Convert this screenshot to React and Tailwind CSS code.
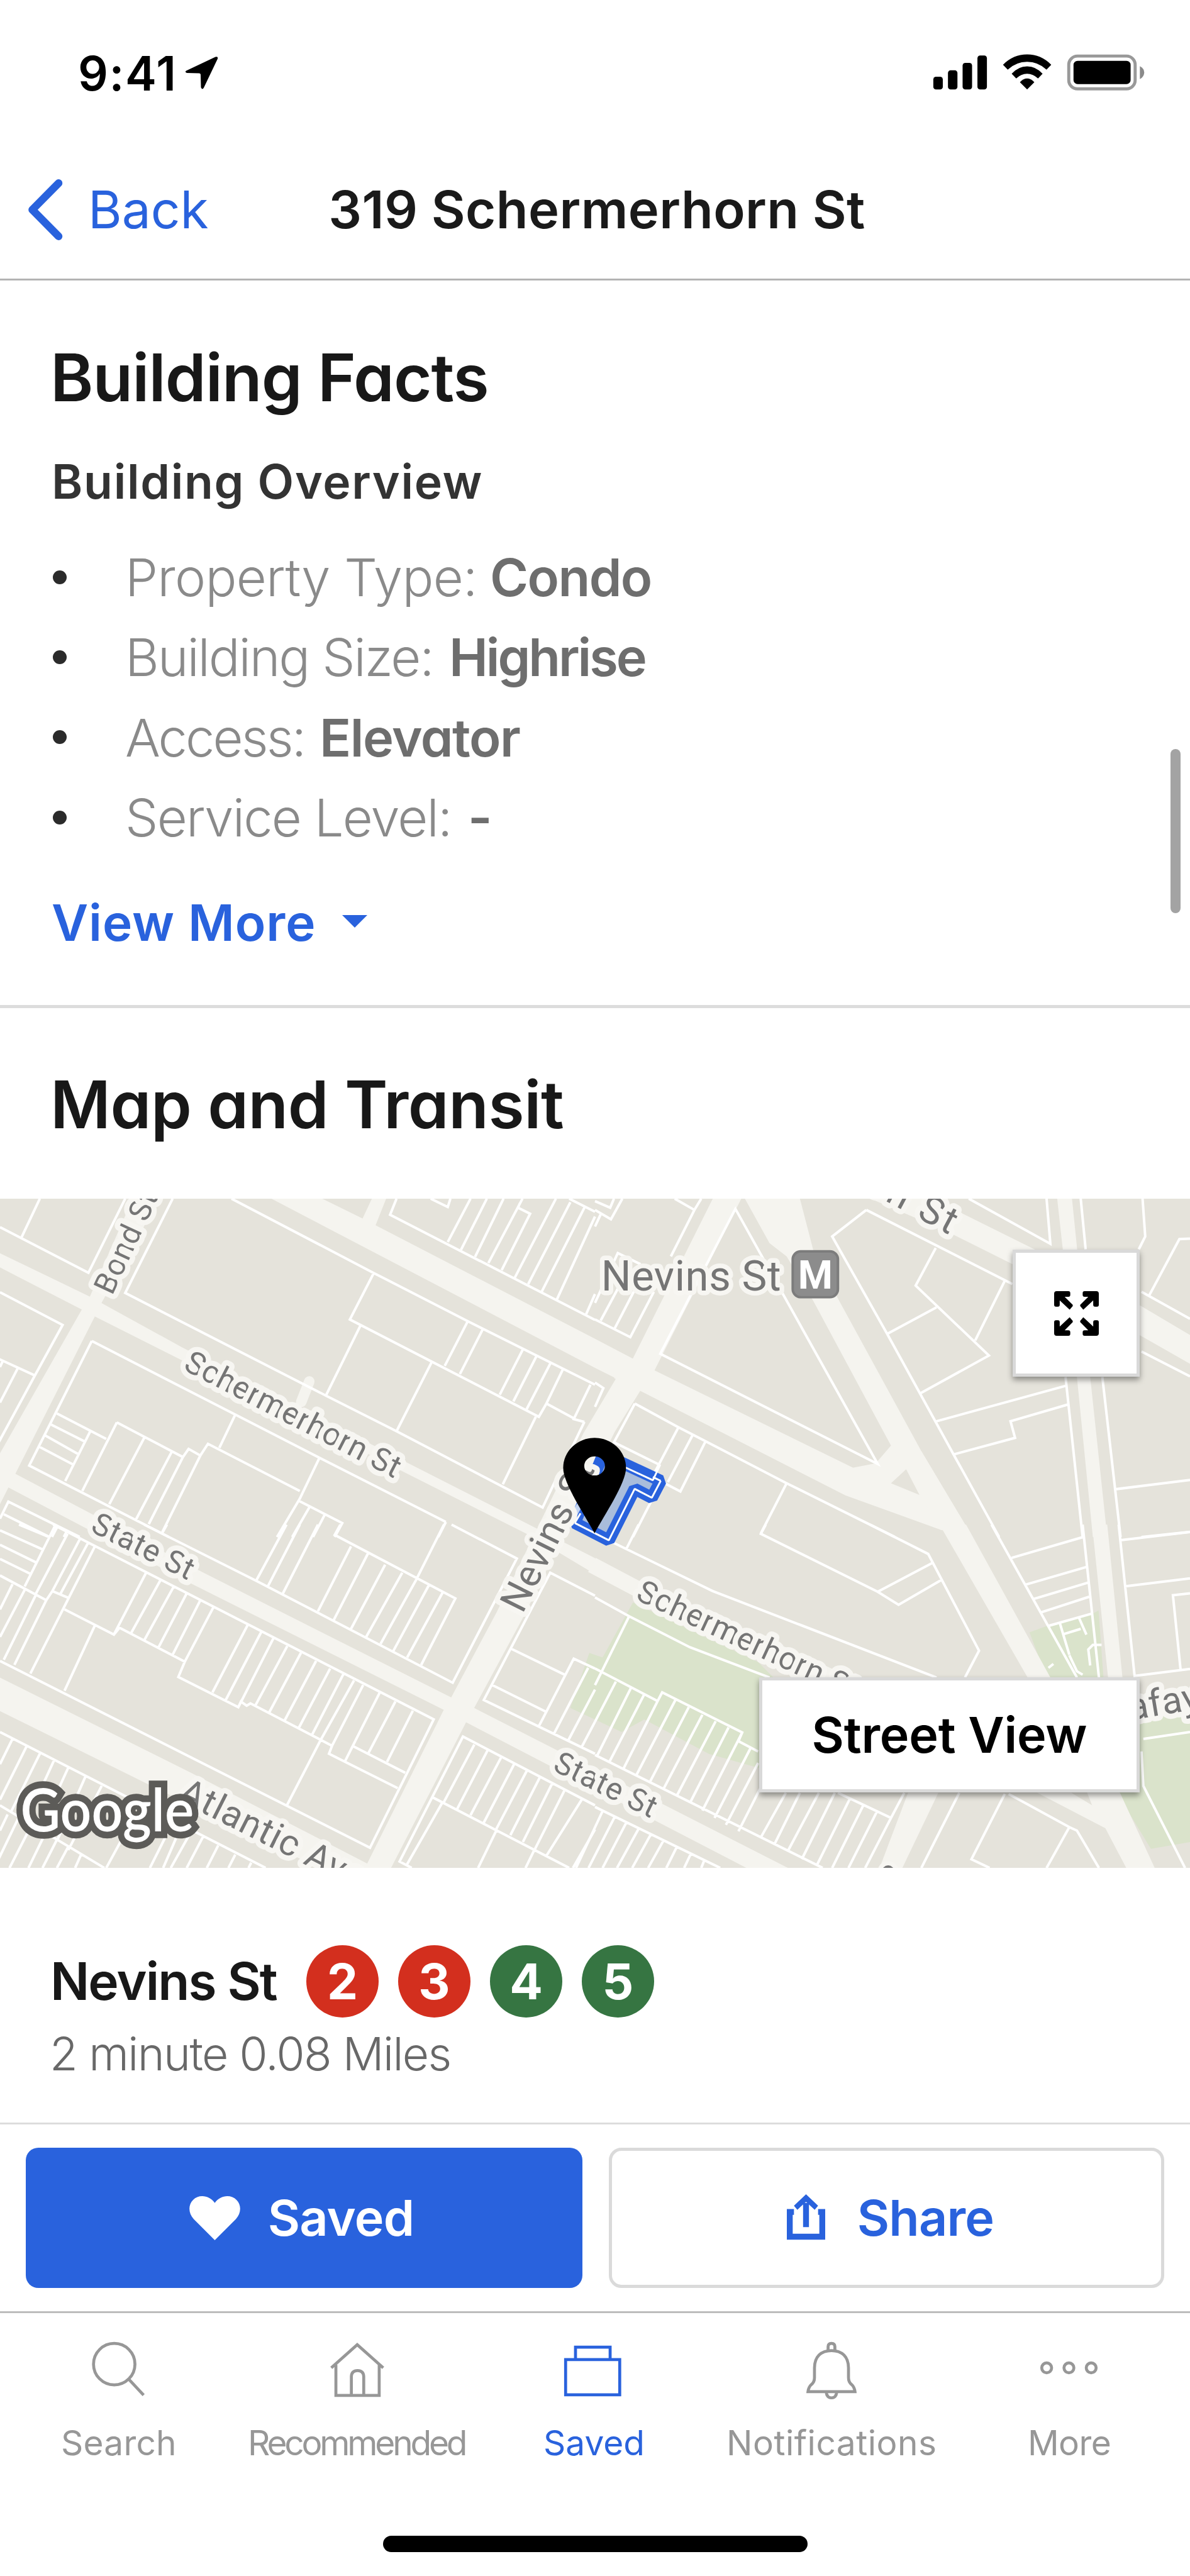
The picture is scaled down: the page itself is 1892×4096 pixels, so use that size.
const FACTS = [
  { label: "Property Type:", value: "Condo", labelClass: "w-[580px] tracking-[-0.75px]", valueClass: "tracking-[-1.6px]" },
  { label: "Building Size:", value: "Highrise", labelClass: "w-[515px] tracking-[-2.2px]", valueClass: "tracking-[-3.1px]" },
  { label: "Access:", value: "Elevator", labelClass: "w-[309px] tracking-[-2.9px]", valueClass: "tracking-[-1.5px]" },
  { label: "Service Level:", value: "-", labelClass: "w-[545px] tracking-[-1.8px]", valueClass: "" },
];

const LINES = [
  { name: "2", color: "bg-[#d32f1e]" },
  { name: "3", color: "bg-[#d32f1e]" },
  { name: "4", color: "bg-[#367542]" },
  { name: "5", color: "bg-[#367542]" },
];

function StatusBar() {
  return (
    <div className="flex h-[233px] shrink-0 items-center justify-between pl-[124px] pr-[40px]">
      <div className="flex items-center">
        <span className="text-[75px] font-semibold leading-none tracking-[1.6px] text-black">9:41</span>
        <svg viewBox="302 92 52 52" className="ml-[13px] mb-[1px] h-[52px] w-[52px]">
          <path d="M349.500 92.500Q354 91 353 95.500L331 141.500Q328.500 145.500 326.500 141L326 121Q326 118.500 323.500 118.500L304 118Q300 116.500 303 114.500Z" fill="#000" />
        </svg>
      </div>
      <svg viewBox="0 0 1200 360" className="h-[118px] w-[394px]">
        <rect x="78" y="195" width="46" height="62" rx="13" />
        <rect x="149" y="164" width="46" height="93" rx="13" />
        <rect x="220" y="128" width="46" height="129" rx="13" />
        <rect x="292" y="92" width="46" height="165" rx="13" />
        <path d="M416 137Q466 87 533 87Q600 87 650 137L627 161Q586 123 533 123Q480 123 439 161Z" />
        <path d="M458 181Q490 145 533 145Q576 145 608 181L586 204Q562 181 533 181Q504 181 480 204Z" />
        <path d="M498 222Q515 204 533 204Q551 204 568 222L533 257Z" />
        <rect x="735" y="95" width="322" height="159" rx="42" fill="none" stroke="#999" strokeWidth="15" />
        <rect x="758" y="118" width="277" height="113" rx="20" />
        <path d="M1080 144Q1101 155 1101 175Q1101 196 1080 207Z" fill="#8a8a8a" />
      </svg>
    </div>
  );
}

function NavBar() {
  return (
    <div className="grid h-[213px] shrink-0 grid-cols-[1fr_auto_1fr] items-center border-b-[3px] border-[#b3b3b3] pb-[9px] pl-[6px]">
      <div className="flex items-center pl-[36px]">
        <svg viewBox="0 0 60 100" className="h-[99px] w-[59px]">
          <path d="M52 7L9.500 50L52 93" fill="none" stroke="#2962dd" strokeWidth="12.500" strokeLinecap="round" strokeLinejoin="round" />
        </svg>
        <span className="ml-[39px] text-[82px] leading-none text-[#2962dd]">Back</span>
      </div>
      <h1 className="text-[83px] font-semibold leading-none tracking-[0.4px] text-[#1a1a1a]">319 Schermerhorn St</h1>
      <div />
    </div>
  );
}

function BuildingFacts() {
  return (
    <section className="relative h-[1157px] shrink-0 border-b-[5px] border-[#dcdcdc] pl-[80px] pt-[89px]">
      <h2 className="text-[104px] font-[570] leading-[130px] tracking-[-0.95px] text-[#181818] [font-feature-settings:'cv11']">Building Facts</h2>
      <h3 className="mt-[61px] pl-[2px] text-[75px] font-semibold leading-[80px] tracking-[1.65px] text-[#333]">Building Overview</h3>
      <ul className="mt-[49px] text-[83px] leading-[127.4px] [font-feature-settings:'cv11']">
        {FACTS.map((f) => (
          <li key={f.label} className="flex h-[127.4px] items-center">
            <span className="mb-[2px] ml-[4px] mr-[93px] h-[22px] w-[22px] rounded-full bg-[#2b2b2b]" />
            <span className={"whitespace-nowrap font-[345] text-[#8a8a8a] " + f.labelClass}>{f.label}</span>
            <span className={"font-semibold text-[#6e6e6e] " + f.valueClass}>{f.value}</span>
          </li>
        ))}
      </ul>
      <div className="mt-[52px] flex h-[100px] items-center pl-[2px]">
        <span className="text-[80px] font-semibold tracking-[0.9px] text-[#2962dd]">View More</span>
        <svg viewBox="0 0 40 20" className="ml-[42px] mb-[3px] h-[20px] w-[40px]">
          <path d="M0 0H40L20 20Z" fill="#2962dd" />
        </svg>
      </div>
      <div className="absolute right-[15px] top-[745px] h-[261px] w-[16px] rounded-full bg-[#a3a3a3]" />
    </section>
  );
}

/* Lot outlines, one path per map tile, in the tile's own grid. */
const LOTS_NW =
  "M0 168L233 374L330 39M105 39L57 213M0 462L165 610L92 838L-5 1145M92 838L-10 758M8 770L0 800M47 805L0 960M455 39L330 465L860 930L1045 1090L1430 1435L1470 1290M1540 1048L1500 1190M610 39L985 375L1235 595L1568 880M985 375L922 585L1420 1025L1440 965L1510 1030M950 612L860 925M1232 595L1172 795M1272 630L1212 832M1378 720L1317 925M1414 750L1353 955M1450 785L1388 990M1483 812L1440 965M1556 880L1512 1035L1540 1048M1137 780L1045 1090M1412 1025L1325 1330M1045 39L1028 112L1568 587M1240 39L1180 235M1283 39L1215 270M1327 39L1252 302M1377 39L1287 330M1370 60L1365 80L1397 107L1322 362M1465 39L1357 395M1503 55L1392 425M1540 80L1428 458M1568 120L1468 493M1568 470L1545 560M1135 39L1180 77L1187 39M1500 39L1568 98M242 682L620 1015L842 1210L1175 1500M242 682L77 1245L445 1568M150 1010L280 1125M135 1060L225 1138M120 1110L208 1195M103 1160L192 1240M238 1090L172 1315M308 1050L217 1360M308 1050L482 1207L497 1170L528 1200L548 1147L790 1360M380 1120L288 1420M452 1185L358 1490M482 1207L392 1510M528 1200L428 1545M620 1015L578 1165M842 1210L790 1395L730 1568M788 1405L902 1505L882 1568M815 1435L770 1568M855 1470L825 1568M1175 1500L1155 1568M0 1485L22 1408L210 1568M10 1465L130 1568M150 1525L137 1568M175 1545L168 1568";
const LOTS_NE =
  "M0 585L93 665L155 460M0 510L60 285L120 335M15 590L62 440M52 625L105 450M0 90L42 132L72 39M0 50L40 80L50 39M15 110L0 165M210 39L262 90L280 39M262 90L200 300M370 85L172 740L745 1238ZM715 90L625 210L770 650L945 1195L1065 1568M715 90L1100 425M898 262L845 432L1038 748L858 918M900 530L770 650M1080 410L1002 680M985 39L1200 243L1190 39M1280 39L1293 268M1443 39L1450 210L1433 268M1568 220L1540 222L1460 478M1440 460L1568 582M1440 730L1568 842M900 1045L1240 885M945 1195L1107 1120L1095 1045L1245 970M1240 845L1285 1568M1337 845L1385 1568M1372 1352L1568 1310M1440 1568L1568 1545M105 965L220 1072L505 1325L790 1568M105 965L50 1140L168 1240M220 1072L150 1300M258 1105L192 1320M290 1140L225 1362L150 1295M505 1325L437 1552M150 1400L100 1568M0 870L22 895L0 980";
const LOTS_SW =
  "M380 0L675 245L1193 690L1362 148L1190 0M440 0L428 35M755 0L675 245M790 0L705 272M838 0L745 302M897 0L882 45L1200 322L1110 612M925 95L838 378M970 125L880 415M1015 175L925 455M1060 210L965 490M1097 240L1003 520M1130 265L1037 550M1167 295L1073 580M1170 0L1097 240M1568 310L1450 210L1275 765L1568 1000M1345 540L1488 655M1297 700L1437 815M1568 628L1512 585L1420 880M1550 625L1460 912M1568 720L1498 940M1568 860L1533 970M140 0L1143 850L975 1410L0 595M50 0L130 55M0 25L112 108M0 88L95 165M0 150L80 215M0 222L122 330L138 290L178 318M145 5L65 270M178 40L95 300M210 65L138 290M232 80L160 300M250 95L80 650M33 260L0 370M65 285L0 490M95 305L10 590M122 330L38 612M170 370L300 480L385 210M250 440L170 725M300 480L315 450L487 598L470 665L628 797L635 772L650 790L660 780L875 965L867 1000L1048 1150M422 245L345 475M458 270L380 505M492 300L418 535M528 330L455 568M562 362L487 598M652 440L560 732M688 470L595 765M720 498L628 797M757 530L672 792M793 560L710 818M833 595L750 855M870 628L788 885M905 652L823 915M933 680L845 940M957 700L875 965M1000 735L910 1030M1042 772L970 1000M1088 812L1020 1035M932 968L1068 1083M845 940L757 1222M0 905L700 1498M33 935L0 1045M70 968L0 1200M105 1000L30 1250M142 1030L70 1290M180 1060L100 1350M225 1100L150 1380M268 1140L180 1420M0 1225L275 1498M20 1265L0 1335M50 1275L-15 1498M85 1305L25 1498M120 1345L75 1498M150 1375L112 1498M180 1405L150 1498M215 1435L198 1498M345 1300L280 1498M440 1350L395 1498M470 1345L430 1498M500 1350L450 1498M535 1362L492 1498M575 1400L545 1498M620 1440L602 1498M662 1475L655 1498M1568 1225L1220 925L1053 1470L1085 1498M1140 1190L1500 1498M1250 960L1170 1210M1285 985L1205 1240M1320 1018L1240 1268M1355 1045L1275 1300M1388 1075L1308 1328M1422 1105L1345 1355M1455 1130L1378 1385M1487 1162L1410 1415M1535 1195L1440 1445M1568 1330L1510 1498M1165 1215L1070 1490M1308 1335L1260 1498M1408 1420L1385 1498";
const LOTS_SE =
  "M450 0L437 40L745 293L800 350L912 242M725 0L878 128L1012 550L975 667M745 293L888 168M1045 0L1270 667M1285 0L1328 667M1380 0L1422 660L1568 630M1098 145L1285 55M1135 262L1295 185M1155 325L1300 253M1175 383L1302 315M1195 442L1310 388M1385 68L1568 32M1395 270L1568 235M1568 300L1523 308L1543 630M1445 935L1568 905M1440 990L1445 1140L1555 1498M0 40L310 290L900 667M0 318L90 400L250 535L460 667M90 400L0 700M83 105L115 0M0 628L165 770L177 732L388 907L378 945L430 990M55 685L0 860M95 712L5 1010M130 740L38 1035M165 770L75 1065M212 765L110 1090M247 797L145 1122M283 830L180 1155M318 858L215 1185M352 885L250 1215M388 907L283 1248M410 975L315 1280M430 1040L345 1310M445 1120L378 1338M0 1005L600 1498M503 1170L437 1365M540 1170L472 1398M590 1170L508 1425M632 1170L545 1460M672 1195L585 1485M707 1225L625 1498M742 1255L668 1498M780 1280L712 1498M640 1170L780 1280L815 1170M960 1170L860 1498M1080 1175L992 1460L1040 1498M1090 1175L1250 1320L1270 1335L1328 1498M1250 1320L1190 1498M0 1232L330 1498M20 1250L-50 1498M52 1275L-17 1498M82 1302L20 1498M115 1327L58 1498M147 1352L98 1498M180 1380L140 1498M215 1408L188 1498M252 1438L235 1498M288 1465L280 1498M1225 430L1250 568M1235 478L1280 455M1275 405L1295 480M1305 615L1300 545L1312 525L1335 525M1250 570L1270 640L1285 655M1195 625L1208 608";

function StreetLabel({ x, y, angle, size, length, children }) {
  return (
    <text
      transform={`translate(${x} ${y}) rotate(${angle})`}
      fontSize={size}
      textLength={length}
      fontWeight="450"
      fill="#757575"
      stroke="#f7f6f2"
      strokeWidth="17"
      strokeLinejoin="round"
      style={{ paintOrder: "stroke" }}
    >
      {children}
    </text>
  );
}

function MapArt() {
  return (
    <svg viewBox="0 1934 1920 1080" preserveAspectRatio="none" className="block h-[1064px] w-full bg-[#e5e3db] font-[Roboto,sans-serif]">
      <g transform="translate(960 2460) scale(.61224 .36990)" fill="#dae3cb">
        <path d="M100 340L430 600L470 667V1080L300 1000L130 850L70 905L-65 800L-15 560L20 580Z" />
        <path d="M1145 470L1195 440L1310 390L1327 375L1340 667H1190Z" />
        <path d="M1425 850L1568 815V1385L1465 1415L1375 1170Z" />
      </g>
      <g fill="#f5f4ef">
        <path d="M0 2022L145 2092L294 2174L655 2359L960 2514V2540L860 2480L153 2124L132 2113L0 2045Z" />
        <path d="M955 2525L1040 2570L1130 2613L1241 2660L1500 2780" fill="none" stroke="#f5f4ef" strokeWidth="26" />
        <path d="M214 1934H257L165 2100L153 2124L0 2427H-20V2380L132 2113L145 2092Z" />
        <path d="M-5 2360L23 2377L321 2534L728 2739L765 2756L1073 2913L1275 3016H1208L1052 2935L752 2779L716 2759L306 2554L8 2397L-5 2392Z" />
        <path d="M438 1934H520L585 1966L600 1934H623L606 1977L960 2160L1021 2192L1005 2244L994 2224L960 2207Z" />
        <path d="M1150 1934H1196L1056 2211L1033 2244L992 2310L845 2608L765 2756L752 2779L631 3014H589L716 2759L728 2739L802 2600L941 2313L994 2224L1021 2192Z" />
        <g transform="translate(960 1920) scale(.61224 .35714)">
          <path d="M157 815L680 1255L740 1235L780 1155L860 1180L995 1568L910 1535L660 1380L120 908L50 850L100 762Z" />
          <path d="M395 39H540L575 270L640 490L860 1180L995 1568L910 1535L780 1155L575 500L505 300L460 240Z" />
          <path d="M1218 39H1257L1305 845L1350 1568H1312L1270 845Z" />
          <path d="M700 -60L955 95L1155 265L1440 525L1568 655V785L1440 660L1100 335L925 185L700 20Z" />
          <path d="M820 1262L855 1378L780 1325Z" fill="#e5e3db" />
        </g>
        <g transform="translate(960 2460) scale(.61224 .36990)">
          <path d="M978 0L1200 667L1385 1175L1475 1498H1400L1345 1325L1165 1170H1255L1310 1225L1297 1170L1140 667L915 20L880 0Z" />
          <path d="M1310 0H1350L1390 667H1352Z" />
          <path d="M825 1170H905L810 1498H750Z" />
        </g>
        <path d="M0 2707L309 2861L606 3014H514L245 2882L0 2761Z" />
        <path d="M499 2229L486 2262" fill="none" stroke="#f5f4ef" strokeWidth="17" strokeLinecap="round" />
      </g>
      <g fill="none" stroke="#ffffff" strokeWidth="4">
        <path transform="translate(0 1920) scale(.61224 .35714)" d={LOTS_NW} vectorEffect="non-scaling-stroke" />
        <path transform="translate(960 1920) scale(.61224 .35714)" d={LOTS_NE} vectorEffect="non-scaling-stroke" />
        <path transform="translate(0 2460) scale(.61224 .36990)" d={LOTS_SW} vectorEffect="non-scaling-stroke" />
        <path transform="translate(960 2460) scale(.61224 .36990)" d={LOTS_SE} vectorEffect="non-scaling-stroke" />
      </g>

      <g transform="translate(790 2300) scale(.33333)" strokeLinejoin="bevel">
        <path d="M412 472L577 556L702 307L785 350L828 268L550 139Z" fill="#a9bddb" stroke="#2962dd" strokeWidth="58" />
        <path d="M412 472L577 556L702 307L785 350L828 268M440 425L412 472M650 200L790 265L826 190M790 250L828 268" fill="none" stroke="#fff" strokeWidth="9" />
        <path d="M390 480L385 440L425 375L440 405L410 462Z" fill="#c3d4f1" />
      </g>

      <StreetLabel x={181} y={2091} angle={-65} size={49} length={176}>Bond St</StreetLabel>
      <StreetLabel x={294} y={2209} angle={27.3} size={51} length={385}>Schermerhorn St</StreetLabel>
      <StreetLabel x={144} y={2470} angle={26.7} size={50} length={178}>State St</StreetLabel>
      <StreetLabel x={843} y={2605} angle={-63.4} size={61} length={262}>Nevins St</StreetLabel>
      <StreetLabel x={1024} y={2580} angle={25} size={51} length={388}>Schermerhorn St</StreetLabel>
      <StreetLabel x={890} y={2856} angle={25.9} size={50} length={178}>State St</StreetLabel>
      <StreetLabel x={285} y={2904} angle={26.8} size={59} length={326}>Atlantic Ave</StreetLabel>
      <StreetLabel x={1392} y={1918} angle={28} size={62} length={158}>on St</StreetLabel>
      <StreetLabel x={1791} y={2781} angle={-9.4} size={60} length={370}>Lafayette Ave</StreetLabel>
      <circle cx="1433" cy="3020" r="17" fill="#f7f6f2" />
      <circle cx="1433" cy="3020" r="10" fill="#757575" />

      <text x="970" y="2082" fontSize="68" textLength="290" fill="#757575" stroke="#f7f6f2" strokeWidth="15" strokeLinejoin="round" style={{ paintOrder: "stroke" }}>Nevins St</text>
      <rect x="1279" y="2019" width="73" height="74" rx="13" fill="#8c8c8c" stroke="#7c7c7c" strokeWidth="4" />
      <text x="1315.500" y="2079" fontSize="64" fontWeight="700" fill="#fff" textAnchor="middle">M</text>

      <path
        transform="translate(790 2300) scale(.33333)"
        fillRule="evenodd"
        d="M508 522C458 428 356 280 356 205A152 145 0 0 1 660 205C660 280 558 428 508 522ZM508 150A50 46 0 1 0 508 242A50 46 0 1 0 508 150Z"
      />

      <text x="33" y="2955" fontSize="96" textLength="280" lengthAdjust="spacingAndGlyphs" fill="#fff" stroke="#5c5b58" strokeWidth="22" fontFamily="Lato" fontWeight="600" style={{ paintOrder: "stroke" }}>Google</text>
    </svg>
  );
}

const ARROW = "M4 0H23Q26 0 26 3V6Q26 9 23 9H17L30 22V24L25 30L9 15V22Q9 25 6 25H3Q0 25 0 22V4Q0 0 4 0Z";

function MapAndTransit() {
  return (
    <section className="shrink-0">
      <h2 className="h-[303px] pl-[80px] pt-[88px] text-[104px] font-[570] leading-[130px] tracking-[-0.45px] text-[#181818] [font-feature-settings:'cv11']">Map and Transit</h2>
      <div className="relative">
        <MapArt />
        <button className="absolute right-[80px] top-[81px] flex h-[202px] w-[202px] items-center justify-center border-[5px] border-[#d9d9d9] bg-white shadow-[0_5px_9px_rgba(0,0,0,0.4)]">
          <svg viewBox="0 0 72 72" className="h-[71px] w-[71px]">
            <path d={ARROW} />
            <path d={ARROW} transform="translate(72 0) scale(-1 1)" />
            <path d={ARROW} transform="translate(0 72) scale(1 -1)" />
            <path d={ARROW} transform="translate(72 72) scale(-1 -1)" />
          </svg>
        </button>
        <button className="absolute bottom-[120px] right-[80px] flex h-[183px] w-[605px] items-center justify-center border-[5px] border-[#d9d9d9] bg-white text-[79px] font-semibold leading-none tracking-[-0.2px] text-black shadow-[0_5px_9px_rgba(0,0,0,0.4)]">
          Street View
        </button>
      </div>
      <div className="h-[405px] pt-[123px]">
        <div className="flex h-[115px] items-center pl-[80px]">
          <span className="w-[407px] whitespace-nowrap text-[82px] font-[560] leading-none tracking-[-1.9px] text-[#181818]">Nevins St</span>
          <div className="flex gap-[31px]">
            {LINES.map((l) => (
              <span key={l.name} className={"flex h-[115px] w-[115px] items-center justify-center rounded-full text-[78px] font-bold leading-none text-white " + l.color}>
                {l.name}
              </span>
            ))}
          </div>
        </div>
        <p className="mt-[18px] pl-[79px] text-[73px] font-[360] leading-[80px] tracking-[-1.6px] text-[#686868]">2 minute 0.08 Miles</p>
      </div>
    </section>
  );
}

function ActionBar() {
  return (
    <div className="flex h-[303px] shrink-0 items-center justify-between border-b-[3px] border-t-[3px] border-b-[#bdbdbd] border-t-[#dcdcdc] px-[41px]">
      <button className="flex h-[223px] w-[885px] items-center justify-center rounded-[20px] bg-[#2962dd] pr-[8px] text-[79px] font-semibold leading-none tracking-[-0.75px] text-white">
        <svg viewBox="0 0 82 71" className="mr-[44px] h-[70px] w-[81px]">
          <path d="M41 71L7 37C-2 27 -2 14 6 6C15 -3 32 -2 41 11C50 -2 67 -3 76 6C84 14 84 27 75 37Z" fill="#fff" />
        </svg>
        Saved
      </button>
      <button className="flex h-[223px] w-[883px] items-center justify-center rounded-[20px] border-[5px] border-[#dadada] bg-white pl-[12px] text-[79px] font-semibold leading-none tracking-[-0.8px] text-[#2962dd]">
        <svg viewBox="0 0 62 74" className="mr-[51px] mb-[2px] h-[73px] w-[61px]" fill="none" stroke="#2962dd" strokeWidth="9.500">
          <path d="M11.500 28.500H4.750V68.500H57.250V28.500H50.500M31 53V14" strokeLinejoin="miter" />
          <path d="M31 0L50.500 18.500L45 25L31 12L17 25L11.500 18.500Z" fill="#2962dd" stroke="none" />
        </svg>
        Share
      </button>
    </div>
  );
}

const TABS = [
  {
    name: "Search",
    tracking: "tracking-[0.2px]",
    viewBox: "132 3765 120 120",
    art: (
      <>
        <circle cx="184.500" cy="3816" r="33.500" />
        <path d="M208.500 3841L232 3866" />
      </>
    ),
  },
  {
    name: "Recommended",
    tracking: "tracking-[-4.2px]",
    viewBox: "515 3765 120 120",
    art: (
      <path d="M534 3822L576 3784.500L618 3822M541.500 3817V3866.500H611.500V3817M566.500 3866.500V3836Q567 3826.500 576.500 3826.500Q586 3826.500 586.500 3836V3866.500" />
    ),
  },
  {
    name: "Saved",
    active: true,
    tracking: "",
    viewBox: "900 3765 120 120",
    art: <path d="M914.500 3808.500H1002V3865.500H914.500ZM930.500 3808.500V3788.500H986.500V3808.500" />,
  },
  {
    name: "Notifications",
    tracking: "tracking-[0.5px]",
    viewBox: "1284 3765 120 120",
    art: (
      <>
        <path d="M1306 3860.500H1382Q1381 3853 1376.500 3849Q1371.500 3845 1371.500 3838V3822C1371.500 3804 1361 3794 1344 3794C1327 3794 1316.500 3804 1316.500 3822V3838Q1316.500 3845 1311.500 3849Q1307 3853 1306 3860.500Z" />
        <path d="M1338.500 3794V3788Q1338.500 3782.500 1344 3782.500Q1349.500 3782.500 1349.500 3788V3794M1335.500 3861Q1336.500 3870.500 1344 3870.500Q1351.500 3870.500 1352.500 3861" />
      </>
    ),
  },
  {
    name: "More",
    tracking: "tracking-[-0.6px]",
    viewBox: "1668 3765 120 120",
    art: (
      <>
        <circle cx="1691.500" cy="3822" r="8" />
        <circle cx="1727.500" cy="3822" r="8" />
        <circle cx="1763.500" cy="3822" r="8" />
      </>
    ),
  },
];

function TabBar() {
  return (
    <nav className="grid h-[354px] shrink-0 grid-cols-5 pr-[3px] pt-[31px]">
      {TABS.map((t) => (
        <div key={t.name} className={"flex flex-col items-center " + (t.active ? "text-[#2962dd]" : "text-[#979797]")}>
          <svg viewBox={t.viewBox} className="h-[118px] w-[118px]" fill="none" stroke="currentColor" strokeWidth="4.800">
            {t.art}
          </svg>
          <span className={"mt-[27px] text-[55px] leading-[60px] " + t.tracking}>{t.name}</span>
        </div>
      ))}
    </nav>
  );
}

export default function App() {
  return (
    <div className="flex h-[4096px] w-[1892px] flex-col overflow-hidden bg-white font-['Inter',sans-serif]">
      <StatusBar />
      <NavBar />
      <BuildingFacts />
      <MapAndTransit />
      <ActionBar />
      <TabBar />
      <div className="mx-auto h-[26px] w-[675px] shrink-0 rounded-full bg-black" />
    </div>
  );
}
